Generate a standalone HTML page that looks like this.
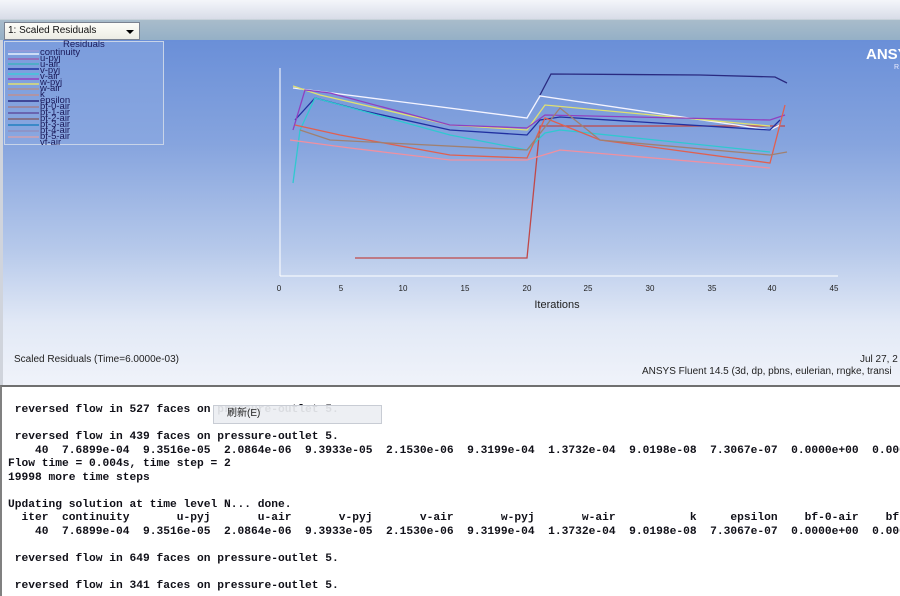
<!DOCTYPE html>
<html><head><meta charset="utf-8"><style>
*{margin:0;padding:0;box-sizing:border-box}
body{width:900px;height:596px;overflow:hidden;background:#fff;position:relative;font-family:"Liberation Sans",sans-serif}
#top{position:absolute;left:0;top:0;width:900px;height:19px;background:linear-gradient(#f4f6fa,#d8dce8)}
#strip{position:absolute;left:0;top:19px;width:900px;height:21px;background:linear-gradient(#a9bccb,#95b0c6);border-top:1px solid #c8d2da}
#dd{position:absolute;left:4px;top:22px;width:136px;height:18px;background:linear-gradient(#fdfdf8,#ececE4);border:1px solid #7a8290;font-size:10px;line-height:16px;padding-left:3px;color:#111}
#dd:after{content:"";position:absolute;right:5px;top:7px;border:4px solid transparent;border-top:4px solid #000;border-bottom:0}
#plot{position:absolute;left:0;top:40px;width:900px;height:346px;background:linear-gradient(#6a8fd8 0%,#86a4de 30%,#b5c8ea 60%,#e2e9f6 82%,#f0f3fa 100%);border-left:3px solid #d0d4dc}
#leg{position:absolute;left:4px;top:41px;width:160px;height:104px;background:rgba(140,170,225,.5);border:1px solid #c8d4e8;font-size:9.5px;color:#1a1a5a;line-height:6px}
#con{position:absolute;left:0;top:385px;width:900px;height:211px;background:#fff;border-top:2px solid #707070;border-left:2px solid #808080}
pre{position:absolute;left:6px;top:17px;font-family:"Liberation Mono",monospace;font-weight:bold;font-size:11.25px;line-height:13.5px;color:#101018;white-space:pre}
#menu{position:absolute;left:213px;top:405px;width:169px;height:19px;background:rgba(236,238,242,.92);border:1px solid #c8ccd4;font-size:10px;line-height:16px;padding:0 0 0 13px;font-family:"Liberation Sans","Noto Sans CJK SC",sans-serif;color:#222}
</style></head><body>
<div id="top"></div>
<div id="strip"></div>
<div id="dd">1: Scaled Residuals</div>
<div id="plot"></div>
<svg style="position:absolute;left:0;top:0" width="900" height="390">
<line x1="280" y1="68" x2="280" y2="276" stroke="#fff" stroke-width="1"/>
<line x1="280" y1="276" x2="838" y2="276" stroke="#fff" stroke-width="1"/>
<g font-family="Liberation Sans" font-size="8" fill="#222" text-anchor="middle">
<text x="279" y="291">0</text><text x="341" y="291">5</text><text x="403" y="291">10</text><text x="465" y="291">15</text><text x="527" y="291">20</text><text x="588" y="291">25</text><text x="650" y="291">30</text><text x="712" y="291">35</text><text x="772" y="291">40</text><text x="834" y="291">45</text>
<text x="557" y="308" font-size="11">Iterations</text>
</g>
<g fill="none" stroke-width="1.3">
<polyline stroke="#2a2a80" points="540,95 551,74 700,75 775,77 787,83"/>
<polyline stroke="#c04848" points="355,258 527,258 540,126 785,126"/>
<polyline stroke="#f4f4ff" points="293,88 527,118 540,96 770,130 780,125"/>
<polyline stroke="#e0e070" points="293,86 320,95 450,125 527,130 545,105 770,126"/>
<polyline stroke="#2030a0" points="295,120 315,98 360,110 450,130 527,135 540,120 560,117 770,130 780,120"/>
<polyline stroke="#9040c0" points="293,130 305,90 330,93 450,125 527,128 545,115 770,120 785,115"/>
<polyline stroke="#30c8d0" points="293,183 300,130 315,98 450,135 527,150 545,133 560,130 770,152"/>
<polyline stroke="#e06050" points="295,125 340,135 450,155 527,158 545,118 600,140 770,163 785,105"/>
<polyline stroke="#f090a0" points="290,140 350,148 450,160 527,160 560,150 770,168"/>
<polyline stroke="#a08070" points="300,130 330,140 527,150 560,108 600,140 770,155 787,152"/>
</g>
<text x="866" y="59" font-family="Liberation Sans" font-weight="bold" font-size="15" fill="#fff">ANSYS</text>
<text x="894" y="69" font-family="Liberation Sans" font-size="7" fill="#eef">R</text>
<text x="14" y="362" font-family="Liberation Sans" font-size="10" fill="#222">Scaled Residuals  (Time=6.0000e-03)</text>
<text x="860" y="362" font-family="Liberation Sans" font-size="10" fill="#222">Jul 27, 2</text>
<text x="642" y="374" font-family="Liberation Sans" font-size="10" fill="#222">ANSYS Fluent 14.5 (3d, dp, pbns, eulerian, rngke, transi</text>
</svg>
<div id="leg">
<svg style="position:absolute;left:0;top:0" width="160" height="104">
<g stroke-width="1.5">
<line x1="3" y1="9" x2="34" y2="9" stroke="#9a9ad8"/><line x1="3" y1="12" x2="34" y2="12" stroke="#e8f0ff"/>
<line x1="3" y1="17" x2="34" y2="17" stroke="#9a60b0"/><line x1="3" y1="22" x2="34" y2="22" stroke="#40b0c0"/>
<line x1="3" y1="27" x2="34" y2="27" stroke="#2030a0"/><line x1="3" y1="32" x2="34" y2="32" stroke="#40c8d8"/>
<line x1="3" y1="37" x2="34" y2="37" stroke="#9040c0"/><line x1="3" y1="42" x2="34" y2="42" stroke="#e0e070"/>
<line x1="3" y1="47" x2="34" y2="47" stroke="#b09090"/><line x1="3" y1="53" x2="34" y2="53" stroke="#c09090"/>
<line x1="3" y1="59" x2="34" y2="59" stroke="#2a2a80"/><line x1="3" y1="65" x2="34" y2="65" stroke="#a08090"/>
<line x1="3" y1="71" x2="34" y2="71" stroke="#6050a0"/><line x1="3" y1="77" x2="34" y2="77" stroke="#806070"/>
<line x1="3" y1="83" x2="34" y2="83" stroke="#2080c0"/><line x1="3" y1="89" x2="34" y2="89" stroke="#9090c0"/>
<line x1="3" y1="95" x2="34" y2="95" stroke="#d0a0b0"/>
</g></svg>
<div style="position:absolute;left:58px;top:0">Residuals</div>
<div style="position:absolute;left:35px;top:8px">continuity<br>u-pyj<br>u-air<br>v-pyj<br>v-air<br>w-pyj<br>w-air<br>k<br>epsilon<br>bf-0-air<br>bf-1-air<br>bf-2-air<br>bf-3-air<br>bf-4-air<br>bf-5-air<br>vf-air</div>
</div>
<div id="con"><pre> reversed flow in 527 faces on pressure-outlet 5.

 reversed flow in 439 faces on pressure-outlet 5.
    40  7.6899e-04  9.3516e-05  2.0864e-06  9.3933e-05  2.1530e-06  9.3199e-04  1.3732e-04  9.0198e-08  7.3067e-07  0.0000e+00  0.0000e+00
Flow time = 0.004s, time step = 2
19998 more time steps

Updating solution at time level N... done.
  iter  continuity       u-pyj       u-air       v-pyj       v-air       w-pyj       w-air           k     epsilon    bf-0-air    bf-1-air
    40  7.6899e-04  9.3516e-05  2.0864e-06  9.3933e-05  2.1530e-06  9.3199e-04  1.3732e-04  9.0198e-08  7.3067e-07  0.0000e+00  0.0000e+00

 reversed flow in 649 faces on pressure-outlet 5.

 reversed flow in 341 faces on pressure-outlet 5.</pre></div>
<div id="menu">刷新(E)</div>
</body></html>
